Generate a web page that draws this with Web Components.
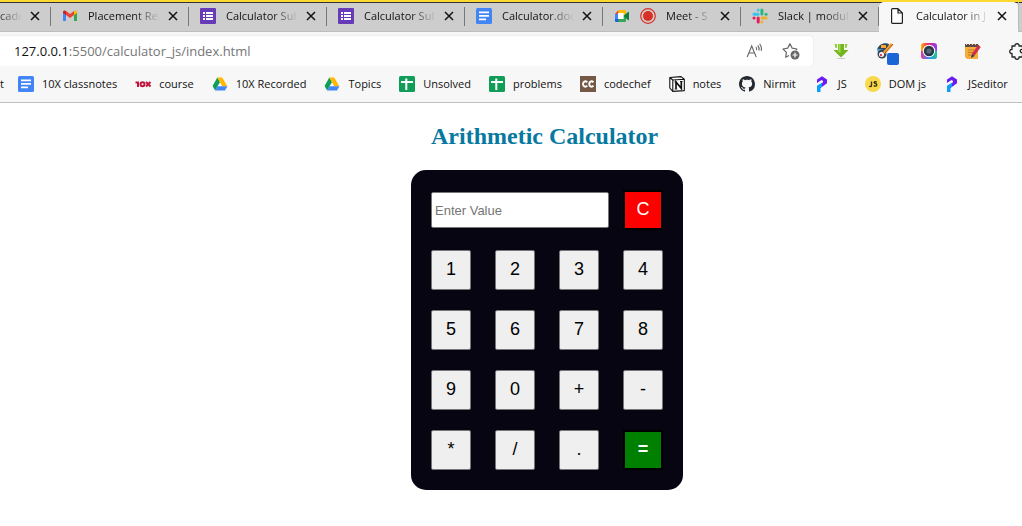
<!DOCTYPE html>
<html lang="en">
<head>
<meta charset="utf-8">
<title>Calculator in JS</title>
<style>
  html, body { margin: 0; background: #fff; }
  body { font: 11px/16px "Open Sans", "Noto Sans", sans-serif; color: #111; overflow-x: hidden; }
</style>
</head>
<body>
<browser-window>
  <tab-strip slot="tabs">
    <browser-tab cut>cade</browser-tab>
    <browser-tab icon="gmail">Placement Rea</browser-tab>
    <browser-tab icon="forms">Calculator Sub</browser-tab>
    <browser-tab icon="forms">Calculator Sub</browser-tab>
    <browser-tab icon="docs">Calculator.doc</browser-tab>
    <browser-tab icon="meet" extra="record">Meet - S</browser-tab>
    <browser-tab icon="slack">Slack | modul</browser-tab>
    <browser-tab icon="page" active>Calculator in J</browser-tab>
  </tab-strip>
  <address-bar slot="address" host="127.0.0.1" path=":5500/calculator_js/index.html"></address-bar>
  <bookmark-bar slot="bookmarks">
    <book-mark cut>t</book-mark>
    <book-mark icon="docs">10X classnotes</book-mark>
    <book-mark icon="tenx">course</book-mark>
    <book-mark icon="drive">10X Recorded</book-mark>
    <book-mark icon="drive">Topics</book-mark>
    <book-mark icon="sheets">Unsolved</book-mark>
    <book-mark icon="sheets">problems</book-mark>
    <book-mark icon="codechef">codechef</book-mark>
    <book-mark icon="notion">notes</book-mark>
    <book-mark icon="github">Nirmit</book-mark>
    <book-mark icon="programiz">JS</book-mark>
    <book-mark icon="jsdisc">DOM js</book-mark>
    <book-mark icon="programiz">JSeditor</book-mark>
  </bookmark-bar>
  <calc-page></calc-page>
</browser-window>

<script>
const ICONS = {
  gmail: `<path fill="#4285f4" d="M1 13V4l3 2.3V13z"/><path fill="#34a853" d="M12 13V6.300L15 4v9z"/><path fill="#ea4335" d="M4 3l4 3 4-3v4L8 10 4 7z"/><path fill="#c5221f" d="M1 4c0-1.600 1.600-2 3-1v4L1 5z"/><path fill="#fbbc04" d="M15 4c0-1.600-1.600-2-3-1v4l3-2z"/>`,
  forms: `<rect width="16" height="16" rx="1" fill="#673ab7"/><path fill="#fff" d="M3 4h2v2H3zM6 4h7v2H6zM3 7h2v2H3zM6 7h7v2H6zM3 10h2v2H3zM6 10h7v2H6z"/>`,
  docs: `<rect width="16" height="16" rx="1.500" fill="#4285f4"/><path fill="#fff" d="M3 3.500h10v1.700H3zM3 7h10v1.700H3zM3 10.500h7v1.700H3z"/>`,
  meet: `<path fill="#4285f4" d="M1 6h3v5H1z"/><path fill="#ea4335" d="M1 6l3.500-4v4z"/><path fill="#fbbc04" d="M4.500 2H11a1 1 0 0 1 1 1v4l-2.500 1V5h-5z"/><path fill="#34a853" d="M4 11h5.500V8L12 6v7a1 1 0 0 1-1 1H4z"/><path fill="#1a66d6" d="M1 11h3.500v3H2a1 1 0 0 1-1-1z"/><path fill="#0b8043" d="M9.500 8L14 4c.5-.4 1-.2 1 .4v7.200c0 .6-.5.800-1 .4z"/><path fill="#fff" d="M4 5h5.500v6H4z"/>`,
  record: `<circle cx="8" cy="8" r="7.300" fill="none" stroke="#d93025" stroke-width="1.200"/><circle cx="8" cy="8" r="5" fill="#d93025"/>`,
  slack: `<g stroke-width="3" stroke-linecap="round"><path stroke="#36c5f0" d="M2 6.200h4"/><path stroke="#36c5f0" d="M6.200 2v.1"/><path stroke="#2eb67d" d="M9.900 2v4"/><path stroke="#2eb67d" d="M14 6.200h.1"/><path stroke="#ecb22e" d="M10 9.900h4"/><path stroke="#ecb22e" d="M9.900 14v.1"/><path stroke="#e01e5a" d="M6.200 10v4"/><path stroke="#e01e5a" d="M2 9.900h.1"/></g>`,
  page: `<path fill="#fff" stroke="#222" stroke-width="1.200" stroke-linejoin="round" d="M1.600 1.500q0-.9.900-.9H8l4.400 4.400v9.500q0 .9-.9.900h-9q-.9 0-.9-.9zM8 .6V5h4.400"/>`,
  tenx: `<g fill="none" stroke="#c2143c" stroke-width="2"><path d="M.5 6.500H2M3 5.500v5.500"/><circle cx="7.500" cy="8.200" r="2"/><path d="M11 6l4.500 4.500M15.500 6L11 10.500"/></g>`,
  drive: `<path fill="#0f9d58" d="M5.300 1.500L.6 10l2.500 4.500L8 6z"/><path fill="#ffba00" d="M5.300 1.500h5l5 8.700h-5z"/><path fill="#4285f4" d="M5.500 10.200h9.900L13 14.500H3.100z"/>`,
  sheets: `<rect width="16" height="16" rx="1.500" fill="#0f9d58"/><path fill="#fff" d="M6.300 2.500h2V5H14v2H8.300v7h-2V7H2V5h4.300z"/>`,
  codechef: `<rect width="16" height="16" fill="#755845"/><g fill="none" stroke="#fff" stroke-width="1.900"><path d="M7.300 6.200C5 4.200 3 6 3 8s2 3.800 4.300 1.800M13.500 6.200C11.200 4.200 9.200 6 9.200 8s2 3.800 4.300 1.800"/></g>`,
  notion: `<path fill="#fff" stroke="#111" stroke-width="1.100" stroke-linejoin="round" d="M.8 1.500L12 .6l3.300 2.700v11.300l-11.500.8L.8 12zM.8 1.500l3 2.500v11.400M3.800 4l11.500-.7"/><path fill="none" stroke="#111" stroke-width="1.700" d="M7 12.800V6l5.300 6.300V5.500"/><path stroke="#111" d="M5.500 6H8M11 5.500h2.500M5.700 13h2.500"/>`,
  github: `<path fill="#24292f" fill-rule="evenodd" d="M8 0C3.580 0 0 3.580 0 8c0 3.540 2.290 6.530 5.470 7.590.4.070.55-.17.55-.38 0-.19-.010-.82-.010-1.490-2.010.37-2.530-.49-2.690-.94-.090-.23-.48-.94-.82-1.130-.28-.15-.68-.52-.010-.53.63-.010 1.080.58 1.230.82.72 1.210 1.870.87 2.330.66.070-.52.28-.87.51-1.070-1.780-.2-3.640-.89-3.640-3.950 0-.87.31-1.590.82-2.150-.080-.2-.36-1.020.080-2.120 0 0 .67-.21 2.200.82.64-.18 1.320-.27 2-.27s1.360.090 2 .27c1.530-1.040 2.200-.82 2.200-.82.44 1.100.16 1.920.080 2.120.51.56.82 1.270.82 2.150 0 3.070-1.870 3.750-3.650 3.950.29.25.54.73.54 1.480 0 1.070-.010 1.930-.010 2.200 0 .21.15.46.55.38A8 8 0 0 0 16 8c0-4.420-3.580-8-8-8z"/>`,
  programiz: `<path fill="#6a1cf5" d="M3 3.500L8 .2l5 3.300v3.800L6.500 12 3 14v-3.500l6-4.200V5L7.500 4 3 7z"/><path fill="#0aa0f8" d="M3 9.800l5-3v3.600l-1.500 1V16H3z"/>`,
  jsdisc: `<circle cx="8" cy="8" r="8" fill="#f9d94c"/><path fill="none" stroke="#3a3410" stroke-width="1.400" d="M6.500 5.500v4c0 1.200-1.600 1.300-2.200.5M11.800 6.200c-1-.9-2.800-.6-2.600.5.200 1 2.600.7 2.600 2.100 0 1.600-2.200 1.700-3 .7"/>`,
  readaloud: `<g fill="none" stroke="#666" stroke-width="1.100"><path d="M.2 14L4.700 3l4.500 11M1.800 10h5.800M8.800 4.200c.9.900 1 1.900.7 2.900M10.700 2.500c1.400 1.500 1.700 3.300 1.200 5M12.600.8c1.800 2.100 2.200 4.500 1.600 7"/></g>`,
  favorite: `<path fill="none" stroke="#666" stroke-width="1.200" stroke-linejoin="round" d="M6 12.500l-3.300 1.800.7-4.900L0 6l4.700-.8L6.900.7l2.300 4.500 4.700.8-1 1"/><circle cx="12" cy="12" r="4.500" fill="#666"/><path stroke="#fff" stroke-width="1.200" d="M12 9.500v5M9.500 12h5"/>`,
  download: `<path fill="#73b51e" d="M5 1h6v6h4.500L8 14.500.5 7H5z"/><path fill="#8fce3d" d="M1.500 1H4v4H2.500zM12 1h2.500l-1 4H12z"/><path fill="#a5d84f" d="M5.500 1h2v9L3.500 7.500h2z"/><path stroke="#ccc" d="M4 15.500h8"/>`,
  dropper: `<path fill="#2f4858" d="M0 7C1 2 7-1 12 1l-1 6-6 2z"/><path fill="#f7a83b" d="M4 2h5v3H4z"/><path fill="#55a7dc" d="M0 6h6l-2 4H1z"/><circle cx="5" cy="11" r="4.500" fill="#34495e"/><circle cx="4.500" cy="11.500" r="2.500" fill="#fff"/><circle cx="4" cy="12" r="1.200" fill="#d5455e"/><path stroke="#f5a02d" stroke-width="3" d="M7 10l8-9"/><path stroke="#ad5425" d="M8 10l8-9"/>`,
  lens: `<linearGradient id="a" x2="1"><stop stop-color="#ffb000"/><stop offset=".45" stop-color="#ed2375"/><stop offset="1" stop-color="#8a3ffc"/></linearGradient><linearGradient id="b" x2="1"><stop stop-color="#e9379b"/><stop offset=".5" stop-color="#2e8bff"/><stop offset="1" stop-color="#18c993"/></linearGradient><rect width="16" height="16" rx="3" fill="url(#a)"/><path fill="url(#b)" d="M0 8h16v5q0 3-3 3H3q-3 0-3-3z"/><circle cx="8" cy="8" r="6.200" fill="#fff"/><circle cx="8" cy="8" r="5.200" fill="#263746"/><circle cx="8" cy="8" r="2.600" fill="#5a6b7a"/>`,
  notes: `<path fill="#f6ad3c" d="M0 3h13v13H2l-2-2z"/><path fill="#5c4a4a" d="M0 1h14v3H0z"/><path stroke="#f4d7a0" stroke-dasharray="1 2" d="M1 1.500h13"/><path stroke="#c27c22" d="M3 7h6M3 9.500h5M3 12h3"/><path stroke="#d22f4b" stroke-width="3.200" d="M8 12l6.500-9"/><path fill="#293a4c" d="M6 15l.8-4 2.700 2z"/>`,
  puzzle: `<path fill="#f7f7f7" stroke="#222" stroke-width="1.300" stroke-linejoin="round" d="M3 3h3c-.5-3 4.500-3 4 0h3.500v3.500c-3-.5-3 3.500 0 3V14H10c.5 3-4.500 3-4 0H3v-3.500c-3 .5-3-4.500 0-4z"/>`
};

class UiIcon extends HTMLElement {
  connectedCallback() {
    this.attachShadow({ mode: 'open' }).innerHTML = `
      <style>:host{display:block;flex:none;width:16px;height:16px}svg{display:block;width:100%;height:100%;overflow:visible}</style>
      <svg viewBox="0 0 16 16" fill="none" aria-hidden="true">${ICONS[this.getAttribute('name')] || ''}</svg>`;
  }
}
customElements.define('ui-icon', UiIcon);

class BrowserWindow extends HTMLElement {
  connectedCallback() {
    this.attachShadow({ mode: 'open' }).innerHTML = `
      <style>
        :host{display:block}
        header{background:#f7f7f7;border-bottom:1px solid #c0c0c0}
      </style>
      <header><slot name="tabs"></slot><slot name="address"></slot><slot name="bookmarks"></slot></header>
      <main><slot></slot></main>`;
  }
}
customElements.define('browser-window', BrowserWindow);

class TabStrip extends HTMLElement {
  connectedCallback() {
    this.attachShadow({ mode: 'open' }).innerHTML = `
      <style>
        :host{display:flex;height:32px;box-sizing:border-box;border-top:2px solid #fbd92f;background:#cdcdcd;box-shadow:inset 0 1px #333,inset 0 -1px #bdbdbd;overflow:hidden}
        .next{flex:1;border-left:1px solid #bbb;border-radius:0 0 0 5px}
      </style>
      <slot></slot><span class="next"></span>`;
  }
}
customElements.define('tab-strip', TabStrip);

class BrowserTab extends HTMLElement {
  connectedCallback() {
    const icons = ['icon', 'extra'].filter(a => this.hasAttribute(a))
      .map(a => `<ui-icon name="${this.getAttribute(a)}"></ui-icon>`).join('');
    this.attachShadow({ mode: 'open' }).innerHTML = `
      <style>
        :host{display:flex;flex:none;box-sizing:border-box;width:138px;height:30px;align-items:center;gap:10px;padding:0 10px 2px 11px;position:relative}
        :host([cut]){width:51px;padding-left:0}
        :host([active]){width:139px;background:#f7f7f7;border-radius:5px 5px 0 0}
        :host(:not([active]))::after{content:"";position:absolute;right:0;top:5px;height:19px;border-right:1px solid #777}
        .title{flex:1;min-width:0;overflow:hidden;white-space:nowrap;-webkit-mask-image:linear-gradient(90deg,#000 calc(100% - 26px),transparent);mask-image:linear-gradient(90deg,#000 calc(100% - 26px),transparent)}
        button{flex:none;width:12px;height:16px;padding:0;border:0;background:none;margin-left:-3px}
        svg{display:block;margin:auto}
      </style>
      ${icons}<span class="title"><slot></slot></span>
      <button type="button" aria-label="Close tab"><svg width="10" height="10" viewBox="0 0 10 10"><path d="M1 1l8 8M9 1L1 9" stroke="#111" stroke-width="1.500"/></svg></button>`;
  }
}
customElements.define('browser-tab', BrowserTab);

class AddressBar extends HTMLElement {
  connectedCallback() {
    const tools = ['download', 'dropper', 'lens', 'notes', 'puzzle']
      .map(n => `<button type="button" class="ext ${n}" aria-label="${n}"><ui-icon name="${n}"></ui-icon></button>`).join('');
    this.attachShadow({ mode: 'open' }).innerHTML = `
      <style>
        :host{display:flex;padding-top:4px;overflow:hidden}
        .field{flex:1;display:flex;align-items:center;gap:20px;height:30px;background:#fff;border-radius:0 4px 4px 0;padding:0 14px;box-shadow:0 0 2px #ddd;box-sizing:border-box}
        .url{flex:1;font-size:13px;line-height:20px;color:#767676;text-decoration:none;white-space:nowrap}
        b{font-weight:400;color:#111}
        button{border:0;background:none;padding:0;margin:0}
        .tools{display:flex;width:203px;margin-left:6px}
        .ext{flex:none;width:44px;display:grid;place-items:center;position:relative}
        .dropper::after{content:"";position:absolute;left:24px;top:17px;width:12px;height:12px;border-radius:2px;background:#1a66d6}
      </style>
      <div class="field">
        <a class="url" href="#"><b>${this.getAttribute('host')}</b>${this.getAttribute('path')}</a>
        <button type="button" aria-label="Read aloud"><ui-icon name="readaloud"></ui-icon></button>
        <button type="button" aria-label="Add to favorites"><ui-icon name="favorite"></ui-icon></button>
      </div>
      <div class="tools">${tools}</div>`;
  }
}
customElements.define('address-bar', AddressBar);

class BookmarkBar extends HTMLElement {
  connectedCallback() {
    this.attachShadow({ mode: 'open' }).innerHTML = `
      <style>:host{display:flex;align-items:center;gap:18px;height:36px}</style><slot></slot>`;
  }
}
customElements.define('bookmark-bar', BookmarkBar);

class BookMark extends HTMLElement {
  connectedCallback() {
    const icon = this.getAttribute('icon');
    this.attachShadow({ mode: 'open' }).innerHTML = `
      <style>
        :host{display:block;flex:none}
        :host([cut]){width:0}
        a{display:flex;align-items:center;gap:8px;color:inherit;text-decoration:none;white-space:nowrap}
      </style>
      <a href="#">${icon ? `<ui-icon name="${icon}"></ui-icon>` : ''}<span><slot></slot></span></a>`;
  }
}
customElements.define('book-mark', BookMark);

class CalcKey extends HTMLElement {
  connectedCallback() {
    this.attachShadow({ mode: 'open' }).innerHTML = `
      <style>
        :host{display:block;width:40px;height:40px}
        button{display:block;width:100%;height:100%;box-sizing:border-box;padding:0 0 2px;border:1px solid #767676;border-radius:2px;background:#efefef;color:#000;font:18px/20px "Liberation Sans",Arial,sans-serif}
        :host([kind]) button{border:2px solid #000;border-radius:0;color:#fff}
        :host([kind=clear]) button{background:red}
        :host([kind=equals]) button{background:green;font-weight:700}
      </style>
      <button type="button"><slot></slot></button>`;
  }
}
customElements.define('calc-key', CalcKey);

class CalcPage extends HTMLElement {
  connectedCallback() {
    const keys = [...'1234567890+-*/.'].map(k => `<calc-key>${k}</calc-key>`).join('');
    this.attachShadow({ mode: 'open' }).innerHTML = `
      <style>
        :host{display:flex;justify-content:center;padding:20px 0 36px 72px;background:#fff}
        h2{margin:0 0 20px 20px;font:700 24px/27px "Liberation Serif","Times New Roman",serif;color:#0779a1;white-space:nowrap}
        .panel{box-sizing:border-box;width:272px;padding:20px;border-radius:15px;background:#080512}
        .top{display:flex;align-items:center;gap:14px;margin-bottom:20px}
        input{flex:1;min-width:0;height:36px;box-sizing:border-box;border:1px solid #767676;border-radius:2px;padding:0 3px;background:#fff;font:13px/16px "Liberation Sans",Arial,sans-serif}
        input::placeholder{color:#757575}
        .keys{display:grid;grid-template-columns:repeat(4,40px);gap:20px 24px}
      </style>
      <section>
        <h2>Arithmetic Calculator</h2>
        <div class="panel">
          <div class="top"><input type="text" aria-label="Value" placeholder="Enter Value"><calc-key kind="clear">C</calc-key></div>
          <div class="keys">${keys}<calc-key kind="equals">=</calc-key></div>
        </div>
      </section>`;
  }
}
customElements.define('calc-page', CalcPage);
</script>
</body>
</html>
